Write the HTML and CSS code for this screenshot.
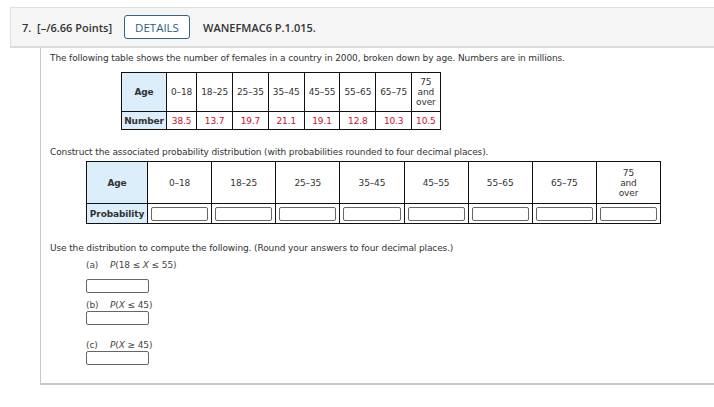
FILE: index.html
```html
<!DOCTYPE html>
<html>
<head>
<meta charset="utf-8">
<link rel="stylesheet" href="styles.css">
</head>
<body>
<div class="question">
  <div class="header">
    <span class="qnum">7.&nbsp; [–/6.66 Points]</span>
    <span class="details">DETAILS</span>
    <span class="code">WANEFMAC6 P.1.015.</span>
  </div>
  <div class="content">
    <p class="line first">The following table shows the number of females in a country in 2000, broken down by age. Numbers are in millions.</p>
    <table class="t1">
      <tr class="r1">
        <th>Age</th><td>0–18</td><td>18–25</td><td>25–35</td><td>35–45</td><td>45–55</td><td>55–65</td><td>65–75</td><td>75<br>and<br>over</td>
      </tr>
      <tr class="r2">
        <th>Number</th><td class="red">38.5</td><td class="red">13.7</td><td class="red">19.7</td><td class="red">21.1</td><td class="red">19.1</td><td class="red">12.8</td><td class="red">10.3</td><td class="red">10.5</td>
      </tr>
    </table>
    <p class="line second">Construct the associated probability distribution (with probabilities rounded to four decimal places).</p>
    <table class="t2">
      <tr class="r1">
        <th>Age</th><td>0–18</td><td>18–25</td><td>25–35</td><td>35–45</td><td>45–55</td><td>55–65</td><td>65–75</td><td>75<br>and<br>over</td>
      </tr>
      <tr class="r2">
        <th>Probability</th>
        <td><span class="box"></span></td><td><span class="box"></span></td><td><span class="box"></span></td><td><span class="box"></span></td>
        <td><span class="box"></span></td><td><span class="box"></span></td><td><span class="box"></span></td><td><span class="box"></span></td>
      </tr>
    </table>
    <p class="line third">Use the distribution to compute the following. (Round your answers to four decimal places.)</p>
    <div class="parts">
      <div class="part part-a">
        <div class="plabel"><span class="ltr">(a)</span><span class="expr"><i>P</i>(18 ≤ <i>X</i> ≤ 55)</span></div>
        <span class="ans"></span>
      </div>
      <div class="part part-b">
        <div class="plabel"><span class="ltr">(b)</span><span class="expr"><i>P</i>(<i>X</i> ≤ 45)</span></div>
        <span class="ans"></span>
      </div>
      <div class="part">
        <div class="plabel"><span class="ltr">(c)</span><span class="expr"><i>P</i>(<i>X</i> ≥ 45)</span></div>
        <span class="ans"></span>
      </div>
    </div>
  </div>
</div>
</body>
</html>
```

FILE: styles.css
```css
html, body {
  margin: 0;
  padding: 0;
  background: #fff;
}
body {
  padding: 7px 0 0 10px;
}
.question {
  width: 720px;
}
.header {
  height: 38px;
  background: #f5f5f5;
  border-top: 1px solid #e0e0e0;
  border-left: 1px solid #e0e0e0;
  border-bottom: 2px solid #dcdcdc;
  display: flex;
  align-items: center;
  padding-left: 11px;
  font-family: "Open Sans", sans-serif;
  font-size: 11px;
  font-weight: 600;
  color: #333;
}
.qnum {
  width: 102px;
  white-space: nowrap;
}
.details {
  box-sizing: border-box;
  height: 24px;
  width: 66px;
  border: 1px solid #2f6687;
  border-radius: 3px;
  display: flex;
  align-items: center;
  justify-content: center;
  color: #2b5e80;
  font-weight: 400;
  font-size: 11.5px;
  background: #fff;
  margin-right: 13px;
}
.code {
  color: #333;
}
.content {
  margin-left: 30px;
  height: 335px;
  border-left: 1px solid #c8c8c8;
  border-bottom: 2px solid #c8c8c8;
  padding-left: 9px;
  font-family: "DejaVu Sans", Verdana, sans-serif;
  font-size: 9px;
  letter-spacing: -0.12px;
  color: #333;
}
.line {
  margin: 0;
  white-space: nowrap;
}
.first {
  padding-top: 5px;
}
table {
  border-collapse: collapse;
}
table th, table td {
  border: 1px solid #111;
  text-align: center;
  padding: 0;
  font-weight: 400;
}
table th {
  background: #dbeefa;
  font-weight: 700;
}
.t1 {
  margin: 9px 0 0 71px;
}
.t1 .r1 {
  height: 39px;
}
.t1 .r2 {
  height: 18px;
}
.t1 td {
  padding: 0 4px;
}
.t1 th {
  width: 44px;
}
.t1 .red {
  color: #c8102e;
}
.second {
  margin-top: 17px;
}
.t2 {
  margin: 4px 0 0 36px;
  table-layout: fixed;
  width: 575px;
}
.t2 th {
  width: 60px;
}
.t2 .r1 {
  height: 42px;
}
.t2 .r2 {
  height: 20px;
}
.t2 .r2 td {
  padding: 0 3px;
}
.box {
  display: block;
  box-sizing: border-box;
  height: 14px;
  border: 1px solid #666;
  border-radius: 2px;
  background: #fff;
}
.third {
  margin-top: 19px;
}
.parts {
  margin-left: 36px;
  margin-top: 6px;
}
.part {
  margin-bottom: 12px;
}
.part-a {
  margin-bottom: 6px;
}
.part-b {
  margin-bottom: 14px;
}
.part-a .ans {
  margin-top: 8px;
}
.plabel {
  display: flex;
  height: 12px;
  align-items: center;
  color: #444;
}
.ltr {
  width: 24px;
}
.expr i {
  font-style: italic;
}
.ans {
  display: block;
  box-sizing: border-box;
  width: 63px;
  height: 14px;
  margin-top: 0;
  border: 1px solid #666;
  border-radius: 2px;
}
```
